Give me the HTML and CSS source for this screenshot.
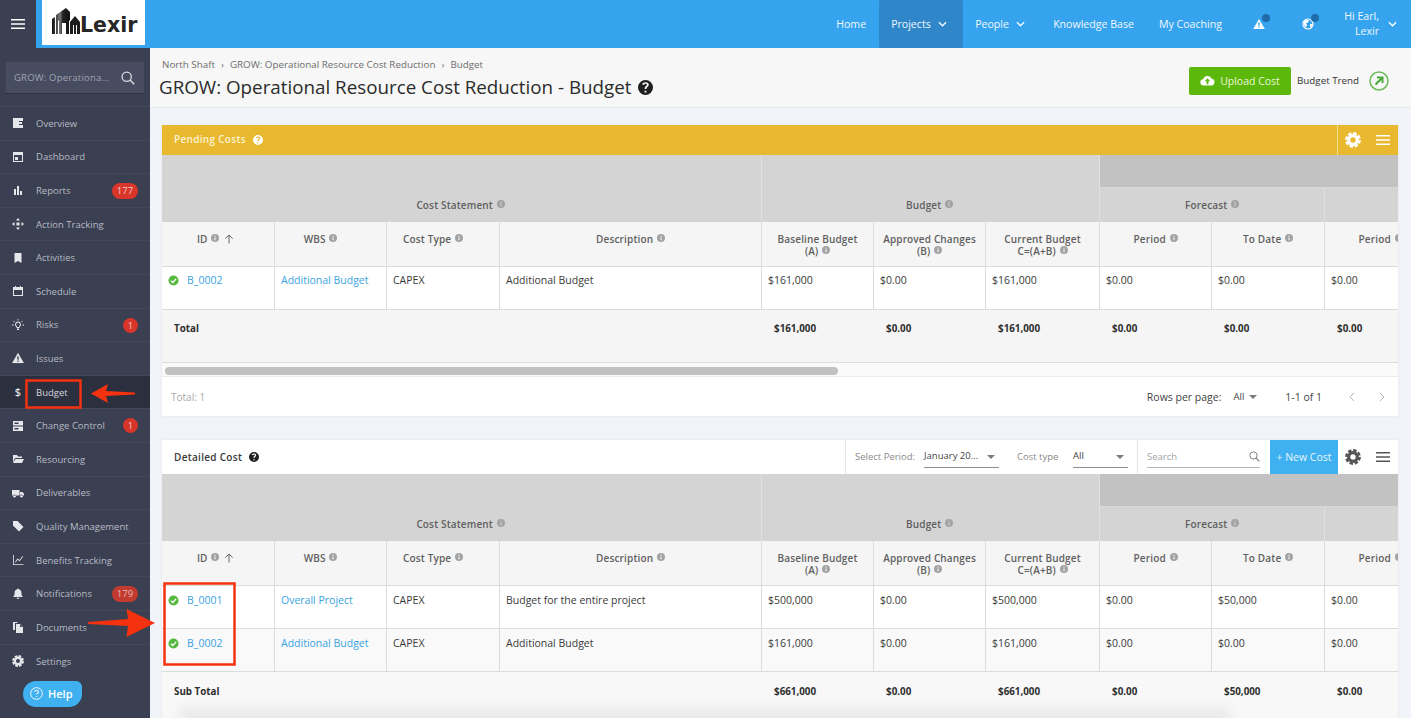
FILE: index.html
```html
<!DOCTYPE html>
<html lang="en">
<head>
<meta charset="utf-8">
<title>GROW: Operational Resource Cost Reduction - Budget</title>
<link rel="stylesheet" href="styles.css">
</head>
<body>
<svg class="sprite" aria-hidden="true">
  <defs>
    <linearGradient id="bld" x1="0" x2="1" y1="0" y2="0"><stop offset="0" stop-color="#111"/><stop offset=".45" stop-color="#777"/><stop offset=".6" stop-color="#222"/><stop offset="1" stop-color="#111"/></linearGradient>
    <symbol id="i-info" viewBox="0 0 10 10"><path fill-rule="evenodd" d="M5 0a5 5 0 1 0 0 10A5 5 0 0 0 5 0ZM4.300 2.200h1.400v1.300H4.300Zm0 2.200h1.400v3.400H4.300Z"/></symbol>
    <symbol id="i-help" viewBox="0 0 14 14"><path fill-rule="evenodd" d="M7 0a7 7 0 1 0 0 14A7 7 0 0 0 7 0Zm-.9 10h1.800v1.700H6.100Zm.1-2.300c0-1.900 2.100-2 2.100-3.200 0-.6-.5-1-1.200-1-.8 0-1.300.5-1.400 1.200L3.900 4.300C4.200 3 5.300 2.200 7.100 2.200c1.800 0 3 1 3 2.300 0 1.900-2.200 2.100-2.200 3.400v.4H6.200Z"/></symbol>
    <symbol id="i-gear" viewBox="0 0 16 16"><circle cx="8" cy="8" r="4.300" fill="none" stroke="currentColor" stroke-width="3.200"/><circle cx="8" cy="8" r="6.600" fill="none" stroke="currentColor" stroke-width="2.600" stroke-dasharray="3.400 1.780"/></symbol>
    <symbol id="i-menu" viewBox="0 0 14 10"><path d="M0 0h14v1.400H0ZM0 4.300h14v1.400H0ZM0 8.600h14V10H0Z"/></symbol>
    <symbol id="i-chev" viewBox="0 0 10 6"><path d="M1 1l4 4 4-4" fill="none" stroke="currentColor" stroke-width="1.500"/></symbol>
    <symbol id="i-check" viewBox="0 0 12 12"><circle cx="6" cy="6" r="5.500" fill="#56b83c"/><path d="M3.200 6.200l2 2 3.700-4" fill="none" stroke="#fff" stroke-width="1.500"/></symbol>
    <symbol id="i-up" viewBox="0 0 10 10"><path d="M5 9.500V1M1.300 4.600 5 1l3.700 3.600" fill="none" stroke="currentColor" stroke-width="1"/></symbol>
    <symbol id="i-alert" viewBox="0 0 14 12"><path fill-rule="evenodd" d="M7 0l7 12H0ZM6.200 4v4h1.600V4Zm0 5v1.500h1.600V9Z"/></symbol>
  </defs>
</svg>

<header class="topbar">
  <button class="burger" aria-label="Menu"><svg class="ic-burger"><use href="#i-menu"/></svg></button>
  <div class="logo">
    <svg class="logo-mark" viewBox="0 0 28 26"><path d="M0 26V11l3-2v17ZM4 26V7l10-7 4 4v8l-1 1v13h-3V15H10v11H7V12l-1 1v13Z" fill="url(#bld)"/><path d="M18 26V14l5-6 5 6v12h-3V17h-1v9h-2V17h-1v9Z" fill="#1c1c1c"/></svg>
    <span class="logo-text">Lexir</span>
  </div>
  <nav class="nav">
    <a class="nav-link nl-home">Home</a>
    <a class="nav-link nl-projects active">Projects <svg class="chev"><use href="#i-chev"/></svg></a>
    <a class="nav-link nl-people">People <svg class="chev"><use href="#i-chev"/></svg></a>
    <a class="nav-link nl-kb">Knowledge Base</a>
    <a class="nav-link nl-coach">My Coaching</a>
    <span class="nav-icon ni-alert"><svg class="ic-alert"><use href="#i-alert"/></svg><i class="dot"></i></span>
    <span class="nav-icon ni-globe">
      <svg class="ic-globe" viewBox="0 0 12 12"><circle cx="6" cy="6" r="5" fill="none" stroke="#fff" stroke-width="1.200"/><path d="M2 3l3-1.500 2 1-1 2-2 .5 1 2-1 2.500-2-2.500ZM8 6h2.500l-1 3L8 8.500Z" fill="#fff"/></svg>
      <i class="dot"></i>
    </span>
    <span class="user">Hi Earl,<br>Lexir</span>
    <svg class="chev chev-user"><use href="#i-chev"/></svg>
  </nav>
</header>

<div class="layout">
  <aside class="sidebar">
    <div class="side-search">
      <div class="search-box">
        <span class="search-text">GROW: Operationa...</span>
        <svg class="ic-search" viewBox="0 0 14 14"><circle cx="5.700" cy="5.700" r="4.600" fill="none" stroke="currentColor" stroke-width="1.300"/><path d="M9 9l4.200 4.200" stroke="currentColor" stroke-width="1.500"/></svg>
      </div>
    </div>
    <ul class="menu">
      <li class="item"><svg class="mi" viewBox="0 0 12 12"><path fill-rule="evenodd" d="M1 1h10v3H7v1h3v2H7v1h4v3H1Z"/></svg>Overview</li>
      <li class="item"><svg class="mi" viewBox="0 0 12 12"><path fill-rule="evenodd" d="M1 1h10v10H1ZM2 4v6h8V4ZM3 6h3v3H3Z"/></svg>Dashboard</li>
      <li class="item"><svg class="mi" viewBox="0 0 12 12"><path d="M2 5h2v6H2ZM5 2h2v9H5ZM8 7h2v4H8Z"/></svg>Reports<span class="badge pill">177</span></li>
      <li class="item"><svg class="mi" viewBox="0 0 12 12"><path d="M4.500 4.500h3v3h-3ZM6 0l2 2.500H4ZM6 12l-2-2.500h4ZM0 6l2.500-2v4ZM12 6 9.500 8V4Z"/></svg>Action Tracking</li>
      <li class="item"><svg class="mi" viewBox="0 0 12 12"><path d="M2.500 1h7v10L6 9l-3.500 2Z"/></svg>Activities</li>
      <li class="item"><svg class="mi" viewBox="0 0 12 12"><path fill-rule="evenodd" d="M1 2h2V1h1v1h4V1h1v1h2v9H1Zm1 3v5h8V5Z"/></svg>Schedule</li>
      <li class="item"><svg class="mi" viewBox="0 0 12 12"><path fill-rule="evenodd" d="M6 2.500a3 3 0 0 1 1.500 5.600V9h-3v-.9A3 3 0 0 1 6 2.500Zm0 1a2 2 0 0 0-1 3.700V8h2v-.8a2 2 0 0 0-1-3.700ZM5 9.500h2V11H5ZM5.600 0h.8v1.500h-.8ZM0 5.600h1.500v.8H0ZM10.500 5.600H12v.8h-1.500ZM1.700 1.700l1.100 1.100-.5.500-1.100-1.100ZM10.300 1.700l-1.100 1.100.5.500 1.100-1.100Z"/></svg>Risks<span class="badge dotbadge">1</span></li>
      <li class="item"><svg class="mi" viewBox="0 0 14 12"><use href="#i-alert"/></svg>Issues</li>
      <li class="item current"><span class="mi mi-dollar">$</span>Budget</li>
      <li class="item"><svg class="mi" viewBox="0 0 12 12"><path fill-rule="evenodd" d="M1 1h10v4.500H1Zm0 5.500h10V11H1ZM2.500 2.500v1.500h4V2.500Zm0 5.500v1.500h4V8Z"/></svg>Change Control<span class="badge dotbadge">1</span></li>
      <li class="item"><svg class="mi" viewBox="0 0 12 12"><path d="M1 2h4l1 1.500h4V5H3L1 9.500ZM3.500 6H12l-2 4H1Z"/></svg>Resourcing</li>
      <li class="item"><svg class="mi" viewBox="0 0 12 12"><path fill-rule="evenodd" d="M0 3h7.500v5.500H0ZM8 5h2.500L12 6.800v1.700H8ZM2.500 7.500a1.500 1.500 0 1 1 0 3 1.500 1.500 0 0 1 0-3Zm7 0a1.500 1.500 0 1 1 0 3 1.500 1.500 0 0 1 0-3Z"/></svg>Deliverables</li>
      <li class="item"><svg class="mi" viewBox="0 0 12 12"><path d="M1 1h4.500L11.500 7 7 11.500 1 5.500Z"/></svg>Quality Management</li>
      <li class="item"><svg class="mi" viewBox="0 0 12 12"><path d="M1 1h.8v9.200H11.500v.8H1ZM3 8l2.500-3.500 2 1.500L10.500 2l.6.500-3.400 4.800-2-1.500L3.600 8.500Z"/></svg>Benefits Tracking</li>
      <li class="item"><svg class="mi" viewBox="0 0 12 12"><path d="M6 0.500c.5 0 .8.300.8.800 1.700.4 2.600 1.700 2.600 3.500 0 2.500.6 3.300 1.600 4.200H1c1-.9 1.600-1.700 1.600-4.200 0-1.800.9-3.100 2.600-3.500 0-.5.300-.8.800-.8ZM4.700 9.800h2.600a1.300 1.300 0 0 1-2.600 0Z"/></svg>Notifications<span class="badge pill dim">179</span></li>
      <li class="item"><svg class="mi" viewBox="0 0 12 12"><path d="M1 1h4l1 1H3v7H1ZM4 3h4l3 3v6H4ZM8 3.500V6h2.500Z"/></svg>Documents</li>
      <li class="item last"><svg class="mi"><use href="#i-gear"/></svg>Settings</li>
    </ul>
  </aside>

  <main class="main">
    <section class="page-head">
      <div class="page-titles">
        <div class="crumbs"><span>North Shaft</span><b>›</b><span>GROW: Operational Resource Cost Reduction</span><b>›</b><span>Budget</span></div>
        <h1 class="title">GROW: Operational Resource Cost Reduction - Budget <svg class="ic-title-help"><use href="#i-help"/></svg></h1>
      </div>
      <div class="page-actions">
        <button class="btn-upload"><svg class="ic-cloud" viewBox="0 0 16 12"><path fill-rule="evenodd" d="M4 11.500a3.500 3.500 0 0 1-.6-7A5 5 0 0 1 12.700 4a3.800 3.800 0 0 1-.5 7.500ZM8 3.500 5 6.800h2V10h2V6.800h2Z"/></svg>Upload Cost</button>
        <span class="trend">Budget Trend</span>
        <svg class="ic-trend" viewBox="0 0 20 20"><circle cx="10" cy="10" r="9" fill="none" stroke="#6cbb5a" stroke-width="1.500"/><path d="M6.500 13.500l6-6M8 6.500h5.500V12" fill="none" stroke="#4aa83a" stroke-width="2"/></svg>
      </div>
    </section>

    <div class="content">
      <section class="card card-one">
        <div class="card-head yellow">
          <span class="ch-title">Pending Costs</span>
          <svg class="ic-help-w"><use href="#i-help"/></svg>
          <span class="grow"></span>
          <span class="ch-tools"><svg class="ic-gear"><use href="#i-gear"/></svg><svg class="ic-menu"><use href="#i-menu"/></svg></span>
        </div>
        <div class="table-wrap">
          <table class="grid">
            <colgroup><col class="c0"><col class="c1"><col class="c2"><col class="c3"><col class="c1"><col class="c1"><col class="c4"><col class="c1"><col class="c2"><col class="c1"></colgroup>
            <thead>
              <tr class="r-top"><th class="group bot" colspan="4" rowspan="2">Cost Statement <svg class="info"><use href="#i-info"/></svg></th><th class="group bot" colspan="3" rowspan="2">Budget <svg class="info"><use href="#i-info"/></svg></th><th class="dark" colspan="3"></th></tr>
              <tr class="r-mid"><th class="group" colspan="2">Forecast <svg class="info"><use href="#i-info"/></svg></th><th class="group"></th></tr>
              <tr class="r-col">
                <th class="th-id">ID <svg class="info"><use href="#i-info"/></svg> <svg class="ic-up"><use href="#i-up"/></svg></th>
                <th class="th-off">WBS <svg class="info"><use href="#i-info"/></svg></th>
                <th class="th-off">Cost Type <svg class="info"><use href="#i-info"/></svg></th>
                <th>Description <svg class="info"><use href="#i-info"/></svg></th>
                <th>Baseline Budget<br>(A) <svg class="info"><use href="#i-info"/></svg></th>
                <th>Approved Changes<br>(B) <svg class="info"><use href="#i-info"/></svg></th>
                <th>Current Budget<br>C=(A+B) <svg class="info"><use href="#i-info"/></svg></th>
                <th>Period <svg class="info"><use href="#i-info"/></svg></th>
                <th>To Date <svg class="info"><use href="#i-info"/></svg></th>
                <th>Period <svg class="info"><use href="#i-info"/></svg></th>
              </tr>
            </thead>
            <tbody>
              <tr class="r-data">
                <td class="idc"><svg class="ic-check"><use href="#i-check"/></svg><a class="lnk">B_0002</a></td>
                <td><a class="lnk">Additional Budget</a></td><td>CAPEX</td><td>Additional Budget</td>
                <td>$161,000</td><td>$0.00</td><td>$161,000</td><td>$0.00</td><td>$0.00</td><td>$0.00</td>
              </tr>
              <tr class="r-total">
                <td colspan="4">Total</td><td>$161,000</td><td>$0.00</td><td>$161,000</td><td>$0.00</td><td>$0.00</td><td>$0.00</td>
              </tr>
            </tbody>
          </table>
        </div>
        <div class="scroll"><div class="thumb"></div></div>
        <div class="card-foot">
          <span class="total">Total: 1</span>
          <span class="grow"></span>
          <span class="rpp">Rows per page:</span>
          <span class="rpp-val">All</span><i class="caret"></i>
          <span class="range">1-1 of 1</span>
          <svg class="pg" viewBox="0 0 6 10"><path d="M5 1 1 5l4 4" fill="none" stroke="currentColor"/></svg>
          <svg class="pg" viewBox="0 0 6 10"><path d="M1 1l4 4-4 4" fill="none" stroke="currentColor"/></svg>
        </div>
      </section>

      <section class="card card-two">
        <div class="card-head plain">
          <span class="dc-title">Detailed Cost</span>
          <svg class="ic-help-k"><use href="#i-help"/></svg>
          <span class="grow"></span>
          <div class="filters">
            <label class="flabel">Select Period:</label>
            <span class="fsel sel-period">January 20...<i class="caret"></i></span>
            <label class="flabel fl-type">Cost type</label>
            <span class="fsel sel-type">All<i class="caret"></i></span>
          </div>
          <div class="searchf"><span class="sf"><span>Search</span><svg class="ic-s2" viewBox="0 0 14 14"><circle cx="5.700" cy="5.700" r="4.600" fill="none" stroke="currentColor" stroke-width="1.200"/><path d="M9 9l4.200 4.200" stroke="currentColor" stroke-width="1.400"/></svg></span></div>
          <button class="btn-new">+ New Cost</button>
          <span class="ch-tools dark-tools"><svg class="ic-gear"><use href="#i-gear"/></svg><svg class="ic-menu"><use href="#i-menu"/></svg></span>
        </div>
        <div class="table-wrap">
          <table class="grid">
            <colgroup><col class="c0"><col class="c1"><col class="c2"><col class="c3"><col class="c1"><col class="c1"><col class="c4"><col class="c1"><col class="c2"><col class="c1"></colgroup>
            <thead>
              <tr class="r-top"><th class="group bot" colspan="4" rowspan="2">Cost Statement <svg class="info"><use href="#i-info"/></svg></th><th class="group bot" colspan="3" rowspan="2">Budget <svg class="info"><use href="#i-info"/></svg></th><th class="dark" colspan="3"></th></tr>
              <tr class="r-mid"><th class="group" colspan="2">Forecast <svg class="info"><use href="#i-info"/></svg></th><th class="group"></th></tr>
              <tr class="r-col">
                <th class="th-id">ID <svg class="info"><use href="#i-info"/></svg> <svg class="ic-up"><use href="#i-up"/></svg></th>
                <th class="th-off">WBS <svg class="info"><use href="#i-info"/></svg></th>
                <th class="th-off">Cost Type <svg class="info"><use href="#i-info"/></svg></th>
                <th>Description <svg class="info"><use href="#i-info"/></svg></th>
                <th>Baseline Budget<br>(A) <svg class="info"><use href="#i-info"/></svg></th>
                <th>Approved Changes<br>(B) <svg class="info"><use href="#i-info"/></svg></th>
                <th>Current Budget<br>C=(A+B) <svg class="info"><use href="#i-info"/></svg></th>
                <th>Period <svg class="info"><use href="#i-info"/></svg></th>
                <th>To Date <svg class="info"><use href="#i-info"/></svg></th>
                <th>Period <svg class="info"><use href="#i-info"/></svg></th>
              </tr>
            </thead>
            <tbody>
              <tr class="r-data">
                <td class="idc"><svg class="ic-check"><use href="#i-check"/></svg><a class="lnk">B_0001</a></td>
                <td><a class="lnk">Overall Project</a></td><td>CAPEX</td><td>Budget for the entire project</td>
                <td>$500,000</td><td>$0.00</td><td>$500,000</td><td>$0.00</td><td>$50,000</td><td>$0.00</td>
              </tr>
              <tr class="r-data hover">
                <td class="idc"><svg class="ic-check"><use href="#i-check"/></svg><a class="lnk">B_0002</a></td>
                <td><a class="lnk">Additional Budget</a></td><td>CAPEX</td><td>Additional Budget</td>
                <td>$161,000</td><td>$0.00</td><td>$161,000</td><td>$0.00</td><td>$0.00</td><td>$0.00</td>
              </tr>
              <tr class="r-total sub">
                <td colspan="4">Sub Total</td><td>$661,000</td><td>$0.00</td><td>$661,000</td><td>$0.00</td><td>$50,000</td><td>$0.00</td>
              </tr>
            </tbody>
          </table>
        </div>
      </section>
    </div>
  </main>
</div>

<button class="help"><svg class="ic-help-o" viewBox="0 0 14 14"><circle cx="7" cy="7" r="6.300" fill="none" stroke="#fff" stroke-width="1"/><path d="M5 5.400c.1-1.100.9-1.800 2-1.800 1.200 0 2 .7 2 1.700 0 1.400-1.800 1.500-1.800 2.900M7.200 9.600v1.200" fill="none" stroke="#fff" stroke-width="1.100"/></svg>Help</button>
<div class="bottom-fade"></div>

<svg class="marks" viewBox="0 0 1411 718" aria-hidden="true">
  <rect x="26.500" y="380.500" width="54" height="27" fill="none" stroke="#f5320f" stroke-width="2.500"/>
  <path d="M91 393.500 108 384l-2 7 29 1.500v2L106 396l2 7Z" fill="#f5320f"/>
  <rect x="164.500" y="583.500" width="70" height="81" fill="none" stroke="#f5320f" stroke-width="2.500"/>
  <path d="M88 622l40-3-1.500-10L155 623l-28.500 14 1.500-11-40-2Z" fill="#f5320f"/>
</svg>
</body>
</html>
```
FILE: styles.css
```css
* { box-sizing: border-box; }
html, body { margin: 0; height: 718px; overflow: hidden; }
body {
  font-family: "Open Sans", "Liberation Sans", sans-serif;
  font-size: 10px;
  color: #333;
  background: #f0f3f7;
  position: relative;
}
button { font: inherit; border: 0; padding: 0; }
svg { fill: currentColor; }
.sprite { position: absolute; width: 0; height: 0; }
.grow { flex: 1; }

/* top bar */
.topbar { height: 48px; display: flex; background: #36a3ee; color: #fff; }
.burger { width: 36px; background: #3a3f51; color: #fff; display: flex; align-items: center; justify-content: center; }
.ic-burger { width: 14px; height: 10px; }
.logo { width: 103px; height: 45px; margin-left: 6px; background: #fff; display: flex; padding: 8px 0 0 10px; align-items: flex-start; }
.logo-mark { width: 28px; height: 26px; }
.logo-text { font-family: "DejaVu Sans", sans-serif; font-weight: 700; font-size: 20.500px; line-height: 20px; margin: 7px 0 0 0; color: #262626; }
.nav { flex: 1; display: flex; justify-content: flex-end; align-items: stretch; font-size: 10.600px; padding-right: 14px; }
.nav-link { display: flex; align-items: center; color: #f2f8fe; white-space: nowrap; }
.nl-home { margin-right: 13px; }
.nl-projects { width: 84px; padding-left: 12px; background: #2f87c9; border-radius: 2px; }
.nl-people { margin-left: 12px; width: 78px; }
.nl-kb { margin-right: 25px; }
.nl-coach { margin-right: 31px; }
.chev { width: 9px; height: 6px; margin-left: 7px; }
.nav-icon { position: relative; width: 13px; display: flex; align-items: center; margin-right: 36px; }
.ic-alert { width: 12px; height: 10px; }
.ic-globe { width: 12px; height: 12px; }
.ni-globe { margin-right: 20px; width: 12px; }
.dot { position: absolute; left: 9px; top: 14px; width: 8px; height: 8px; border-radius: 50%; background: #1f6cab; }
.user { align-self: center; text-align: right; line-height: 15px; color: #f2f8fe; width: 45px; margin-top: -1px; }
.chev-user { align-self: center; margin-left: 9px; margin-right: 0; }

/* layout */
.layout { display: flex; height: 670px; }
.sidebar { width: 150px; flex: none; background: #3a3f51; color: #b8bbc5; }
.side-search { height: 59px; padding: 14px 6px 0; border-bottom: 1px solid #444959; }
.search-box { height: 32px; background: #484c61; border-bottom: 1px solid #2c3040; display: flex; align-items: center; padding: 0 8px; color: #9fa3b0; }
.search-text { flex: 1; font-size: 9.500px; letter-spacing: .2px; }
.ic-search { width: 14px; height: 14px; color: #d8dae0; margin-right: 1px; }
.menu { list-style: none; margin: 0; padding: 0; }
.item { height: 33.600px; display: flex; align-items: center; padding: 0 12px 0 12px; border-bottom: 1px solid #444959; font-size: 9.500px; position: relative; }
.item.last { border-bottom: 0; }
.item.current { background: #2b2f3e; color: #d6d8de; }
.mi { width: 12px; height: 12px; flex: none; color: #e6e7ea; margin-right: 12px; }
.mi-dollar { text-align: center; font-size: 11px; line-height: 12px; font-weight: 400; color: #fff; }
.badge { position: absolute; right: 12px; top: 9px; height: 16px; background: #d8362a; color: #f1c9c5; border-radius: 8px; text-align: center; line-height: 16px; font-size: 9.500px; }
.pill { width: 26px; }
.dotbadge { width: 15px; height: 15px; line-height: 15px; }
.dim { background: #c23a30; color: #e6b7b2; }

/* main */
.main { flex: 1; min-width: 0; display: flex; flex-direction: column; }
.page-head { height: 60px; flex: none; background: #f7f7f7; border-bottom: 1px solid #e4e7ee; display: flex; padding: 0 22px 0 9px; }
.page-titles { flex: 1; }
.crumbs { padding: 11px 0 0 3px; font-size: 9.800px; line-height: 12px; color: #6d6d6d; display: flex; }
.crumbs b { font-weight: 400; margin: 0 6px; }
.title { margin: 4px 0 0; font-size: 18.800px; line-height: 24px; font-weight: 400; color: #2b2b2b; display: flex; align-items: center; }
.ic-title-help { width: 15px; height: 15px; margin-left: 6px; color: #1f1f1f; }
.page-actions { display: flex; align-items: center; padding-top: 6px; }
.btn-upload { width: 102px; height: 28px; background: #5cb90b; color: #eaf7d9; border-radius: 2px; font-size: 10.500px; display: flex; align-items: center; justify-content: center; }
.ic-cloud { width: 15px; height: 11px; margin-right: 5px; color: #fff; }
.trend { width: 62px; margin: 0 10px 0 6px; font-size: 9.800px; color: #333; white-space: nowrap; }
.ic-trend { width: 20px; height: 20px; }

.content { padding: 17px 13px 0 12px; flex: 1; overflow: hidden; }
.card { background: #fff; box-shadow: 0 0 2px rgba(0,0,0,.08); }
.card-one { height: 291px; margin-bottom: 24px; }
.card-two { height: 280px; overflow: hidden; }
.card-head { display: flex; align-items: center; }
.yellow { height: 30px; background: #e8b82e; color: #fdf3d2; padding-left: 12px; }
.ch-title { font-weight: 600; font-size: 10px; letter-spacing: .3px; margin-top: -2px; }
.ic-help-w { width: 10px; height: 10px; margin-left: 7px; color: #fff; }
.ch-tools { display: flex; align-items: center; height: 100%; width: 61px; padding-left: 7px; border-left: 1px solid #f3dd95; color: #fff; }
.ic-gear { width: 16px; height: 16px; margin-right: 15px; }
.ic-menu { width: 14px; height: 10px; }
.plain { height: 34px; padding-left: 12px; color: #333; }
.dc-title { font-weight: 600; font-size: 10px; letter-spacing: .3px; color: #3a3a3a; }
.ic-help-k { width: 10px; height: 10px; margin-left: 7px; color: #1f1f1f; }
.filters { width: 293px; height: 34px; border-left: 1px solid #e3e3e3; border-right: 1px solid #e3e3e3; display: flex; align-items: center; padding-left: 9px; font-size: 9.500px; }
.flabel { color: #8a8a8a; width: 62px; margin-right: 7px; white-space: nowrap; margin-top: -1px; }
.fl-type { width: 51px; margin: -1px 5px 0 18px; }
.fsel { position: relative; height: 22px; border-bottom: 1px solid #8f8f8f; line-height: 20px; color: #444; white-space: nowrap; }
.sel-period { width: 75px; }
.sel-type { width: 55px; }
.fsel .caret { position: absolute; right: 4px; top: 9px; margin: 0; }
.caret { display: inline-block; width: 0; height: 0; border-left: 4px solid transparent; border-right: 4px solid transparent; border-top: 4px solid #7b7b7b; }
.searchf { width: 132px; padding: 0 10px 0 9px; }
.sf { display: flex; justify-content: space-between; align-items: center; height: 22px; border-bottom: 1px solid #b5b5b5; font-size: 9.500px; color: #a3a3a3; }
.ic-s2 { width: 11px; height: 11px; color: #777; }
.btn-new { width: 68px; height: 34px; background: #40b1f0; color: #e5f5fd; font-size: 10.500px; white-space: nowrap; }
.dark-tools { border-left: 0; color: #555; width: 60px; padding-left: 7px; }

/* tables */
.table-wrap { overflow: hidden; }
.grid { width: 1274px; table-layout: fixed; border-collapse: separate; border-spacing: 0; font-size: 10px; line-height: 12px; }
.c0 { width: 113px; }
.c1 { width: 112px; }
.c2 { width: 113px; }
.c3 { width: 262px; }
.c4 { width: 114px; }
.grid th { background: #f5f5f5; color: #5f5f5f; font-weight: 600; border-right: 1px solid #dcdcdc; border-bottom: 1px solid #dcdcdc; padding: 0; letter-spacing: .15px; }
.r-top th { height: 33px; }
.r-mid th { height: 34px; }
.grid .group { background: #d4d4d4; border-color: #e0e0e0; border-bottom: 0; }
.grid .bot { vertical-align: bottom; padding: 0 2px 11px 0; }
.grid .dark { background: #c2c2c2; border-right: 0; border-bottom: 1px solid #d8d8d8; }
.r-col th { height: 45px; vertical-align: top; padding-top: 11px; }
.grid .th-off { padding-right: 20px; }
.grid .th-id { padding-right: 5px; }
.info { width: 8px; height: 8px; color: #a3a3a3; margin-left: 1px; vertical-align: 1px; }
.ic-up { width: 10px; height: 10px; color: #666; margin-left: 2px; vertical-align: -1px; }
.grid td { vertical-align: top; padding: 8px 0 0 6px; color: #3a3a3a; font-size: 10.500px; border-right: 1px solid #dcdcdc; border-bottom: 1px solid #dcdcdc; white-space: nowrap; overflow: hidden; }
.r-data td { height: 43px; }
.grid .card-one-row td { padding-top: 7px; }
.card-one .r-data td { padding-top: 7px; }
.r-data.hover td { background: #f9f9f9; }
.lnk { color: #3aa3e3; }
.ic-check { width: 11px; height: 11px; margin-right: 8px; vertical-align: -1.500px; }
.grid .r-total td { background: #f5f5f5; height: 53px; font-weight: 700; color: #2f2f2f; padding: 13px 0 0 12px; border-right: 0; font-size: 9.800px; }
.grid .r-total.sub td { background: #f8f8f8; height: 60px; padding-top: 14px; }

.scroll { height: 14px; padding: 4px 0 0 3px; background: #fafafa; border-bottom: 1px solid #ececec; }
.thumb { width: 673px; height: 8px; background: #c1c1c1; border-radius: 4px; }
.card-foot { height: 39px; display: flex; align-items: center; padding: 0 13px 0 9px; font-size: 10.500px; color: #444; }
.total { color: #a8a8a8; font-size: 10px; }
.rpp { color: #444; margin-right: 12px; }
.rpp-val { font-size: 9.500px; margin-right: 5px; }
.card-foot .caret { margin-right: 28px; }
.range { margin-right: 27px; }
.pg { width: 6px; height: 10px; color: #b3b3b3; margin-right: 24px; }
.pg:last-child { margin-right: 0; }

/* overlays */
.help { position: absolute; left: 23px; top: 681px; width: 59px; height: 26px; background: #3fb0f0; color: #fff; border-radius: 13px 6px 13px 13px; font-weight: 600; font-size: 11px; display: flex; align-items: center; padding: 0 0 2px 7px; }
.ic-help-o { width: 13px; height: 13px; margin-right: 5px; }
.bottom-fade { position: absolute; left: 180px; bottom: -6px; width: 1050px; height: 16px; background: rgba(0,0,0,.06); filter: blur(6px); }
.marks { position: absolute; left: 0; top: 0; width: 1411px; height: 718px; pointer-events: none; fill: none; }
```
